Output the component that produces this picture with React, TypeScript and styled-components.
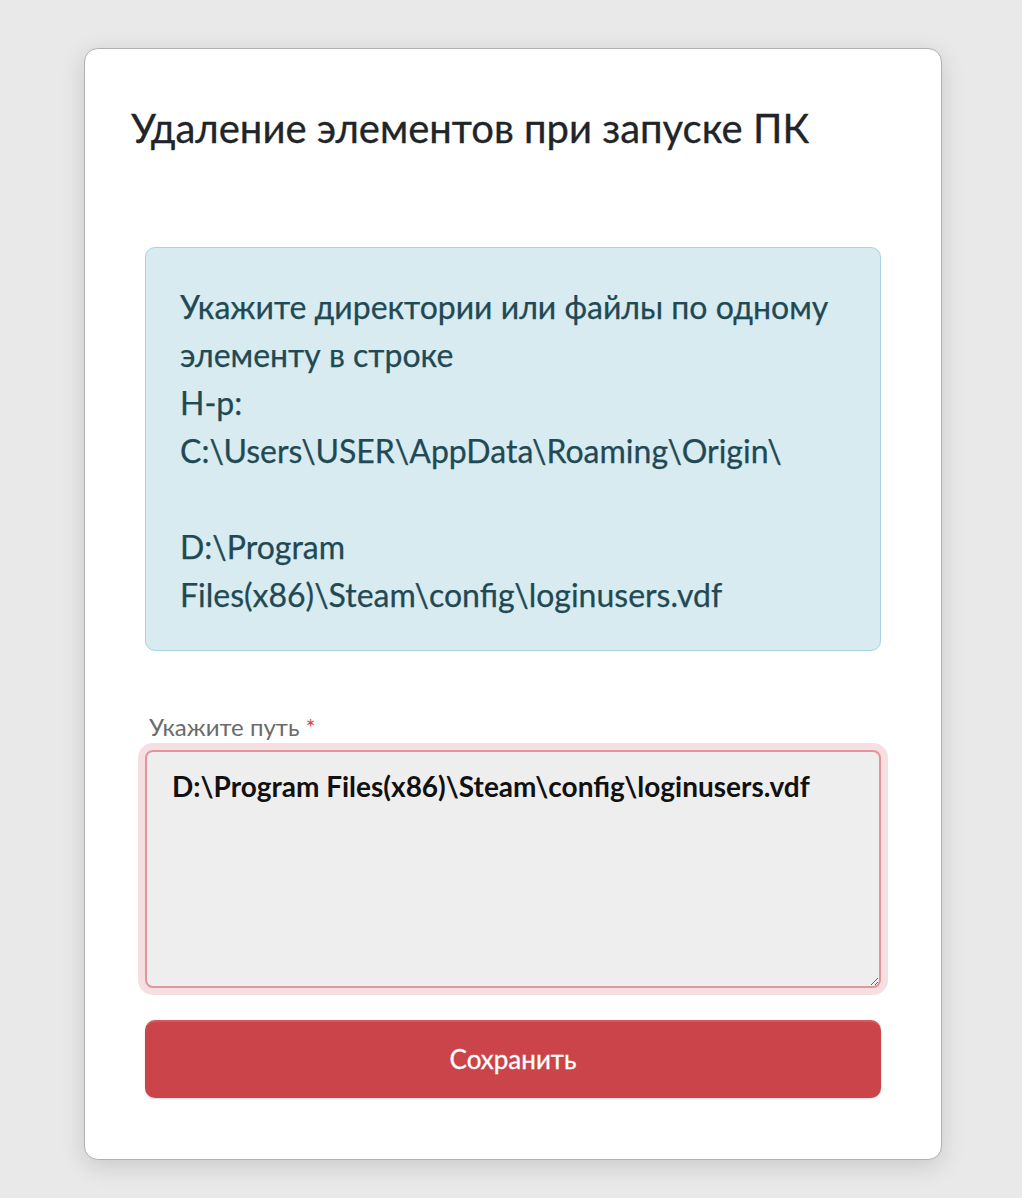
import React from "react";
import styled, { createGlobalStyle } from "styled-components";

const GlobalStyle = createGlobalStyle`
  html, body {
    margin: 0;
    padding: 0;
    background: #e9e9e9;
    font-family: Lato, "Noto Sans", sans-serif;
  }
  * { box-sizing: border-box; }
`;

const Page = styled.div`
  min-height: 1198px;
  padding: 48px 80px 0 84px;
`;

const Card = styled.section`
  width: 858px;
  background: #ffffff;
  border: 1.5px solid #b0b0b0;
  border-radius: 14px;
  box-shadow: 0 6px 24px rgba(0, 0, 0, 0.14);
`;

const Header = styled.header`
  padding: 55px 46px 0;
`;

const Title = styled.h1`
  margin: 0;
  font-size: 40px;
  line-height: 48px;
  font-weight: 400;
  color: #212529;
  -webkit-text-stroke: 0.3px #212529;
`;

const Body = styled.div`
  padding: 95px 60px 61px;
  display: flex;
  flex-direction: column;
`;

const Alert = styled.div`
  background: #d7ebf0;
  border: 1.5px solid #a9d5e0;
  border-radius: 10px;
  padding: 35px 34px 31px;
  color: #1f4954;
  font-size: 32px;
  line-height: 48px;
  -webkit-text-stroke: 0.25px #1f4954;
`;

const Line = styled.div`
  min-height: 48px;
  white-space: nowrap;
`;

const Label = styled.label`
  margin-top: 62px;
  font-size: 24px;
  line-height: 28px;
  color: #6b6b6b;
  padding-left: 4px;
`;

const Required = styled.span`
  color: #d9464c;
  margin-left: 6px;
`;

const TextArea = styled.textarea`
  margin-top: 9px;
  height: 238px;
  width: 100%;
  resize: vertical;
  background: #eeeeee;
  border: 2px solid #e2959b;
  border-radius: 8px;
  box-shadow: 0 0 0 7px #f6dfe0;
  padding: 16px 25px;
  font-family: Lato, "Noto Sans", sans-serif;
  font-weight: 700;
  font-size: 28px;
  line-height: 36px;
  color: #111111;
  outline: none;
`;

const SaveButton = styled.button`
  margin-top: 32px;
  height: 78px;
  width: 100%;
  border: none;
  border-radius: 10px;
  background: #cb444a;
  color: #ffffff;
  font-family: Lato, "Noto Sans", sans-serif;
  font-size: 26px;
  font-weight: 400;
  -webkit-text-stroke: 0.3px #ffffff;
  box-shadow: inset 0 2px 0 rgba(255, 255, 255, 0.12), 0 1px 2px rgba(0, 0, 0, 0.15);
  cursor: pointer;
`;

const lines = [
  "Укажите директории или файлы по одному",
  "элементу в строке",
  "Н-р:",
  "C:\\Users\\USER\\AppData\\Roaming\\Origin\\",
  "",
  "D:\\Program",
  "Files(x86)\\Steam\\config\\loginusers.vdf",
];

export default function App() {
  return (
    <>
      <GlobalStyle />
      <Page>
        <Card>
          <Header>
            <Title>Удаление элементов при запуске ПК</Title>
          </Header>
          <Body>
            <Alert>
              {lines.map((l, i) => (
                <Line key={i}>{l}</Line>
              ))}
            </Alert>
            <Label htmlFor="path">
              Укажите путь<Required>*</Required>
            </Label>
            <TextArea
              id="path"
              spellCheck={false}
              defaultValue={"D:\\Program Files(x86)\\Steam\\config\\loginusers.vdf"}
            />
            <SaveButton type="button">Сохранить</SaveButton>
          </Body>
        </Card>
      </Page>
    </>
  );
}
